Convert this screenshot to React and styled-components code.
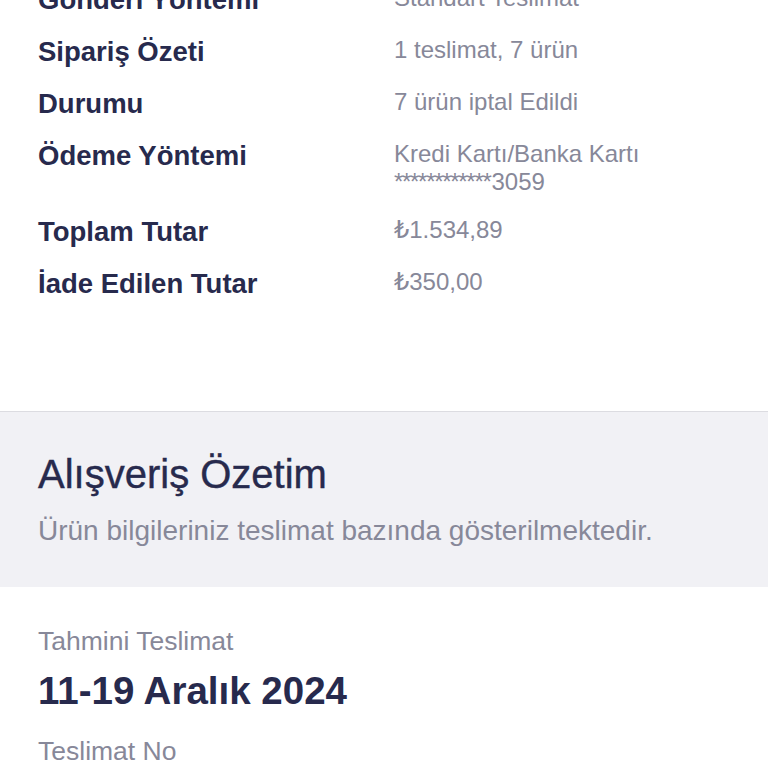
import React from "react";
import styled, { createGlobalStyle } from "styled-components";

const GlobalStyle = createGlobalStyle`
  html, body {
    margin: 0;
    padding: 0;
    background: #ffffff;
    overflow: hidden;
  }
  body {
    font-family: "Liberation Sans", Arial, "DejaVu Sans", sans-serif;
    -webkit-font-smoothing: antialiased;
  }
`;

const Page = styled.div`
  width: 768px;
  height: 768px;
  overflow: hidden;
  background: #ffffff;
`;

const DetailList = styled.dl`
  margin: -16px 0 0 0;
  padding: 0 38px 111px 38px;
  display: grid;
  grid-template-columns: 356px 1fr;
  row-gap: 20px;
`;

const Label = styled.dt`
  margin: 0;
  font-size: 27.5px;
  line-height: 32px;
  font-weight: 700;
  color: #272a4d;
`;

const Value = styled.dd`
  margin: 0;
  font-size: 24px;
  line-height: 28px;
  font-weight: 400;
  color: #878899;
`;

const Mask = styled.span`
  letter-spacing: -1.3px;
  margin-right: 1px;
`;

const SummaryBand = styled.section`
  border-top: 1px solid #dcdce1;
  background: #f1f1f5;
  padding: 38px 38px 39px 38px;
`;

const SummaryTitle = styled.h2`
  margin: 0;
  font-size: 40px;
  line-height: 48px;
  font-weight: 400;
  color: #272a4d;
  -webkit-text-stroke: 0.4px #272a4d;
`;

const SummaryText = styled.p`
  margin: 16px 0 0 0;
  font-size: 28px;
  line-height: 34px;
  color: #878899;
`;

const DeliveryCard = styled.section`
  padding: 38px 38px 0 38px;
`;

const Caption = styled.div`
  font-size: 26.5px;
  line-height: 32px;
  color: #878899;
`;

const Heading = styled.div`
  margin: 11px 0 21px 0;
  font-size: 38.5px;
  line-height: 46px;
  font-weight: 700;
  color: #272a4d;
`;

const rows = [
  { label: "Gönderi Yöntemi", value: "Standart Teslimat" },
  { label: "Sipariş Özeti", value: "1 teslimat, 7 ürün" },
  { label: "Durumu", value: "7 ürün iptal Edildi" },
  {
    label: "Ödeme Yöntemi",
    value: (
      <>
        Kredi Kartı/Banka Kartı
        <br />
        <Mask>************</Mask>3059
      </>
    ),
  },
  { label: "Toplam Tutar", value: "₺1.534,89" },
  { label: "İade Edilen Tutar", value: "₺350,00" },
];

export default function App() {
  return (
    <Page>
      <GlobalStyle />
      <DetailList>
        {rows.map((r) => (
          <React.Fragment key={r.label}>
            <Label>{r.label}</Label>
            <Value>{r.value}</Value>
          </React.Fragment>
        ))}
      </DetailList>
      <SummaryBand>
        <SummaryTitle>Alışveriş Özetim</SummaryTitle>
        <SummaryText>Ürün bilgileriniz teslimat bazında gösterilmektedir.</SummaryText>
      </SummaryBand>
      <DeliveryCard>
        <Caption>Tahmini Teslimat</Caption>
        <Heading>11-19 Aralık 2024</Heading>
        <Caption>Teslimat No</Caption>
      </DeliveryCard>
    </Page>
  );
}
